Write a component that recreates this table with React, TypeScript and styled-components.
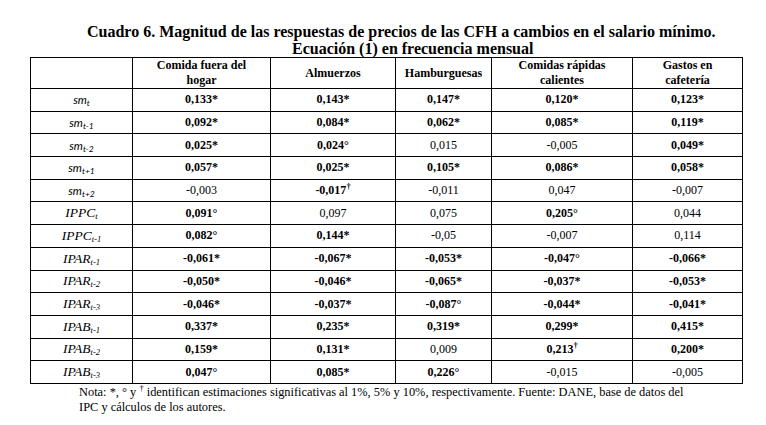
import React from "react";
import styled, { createGlobalStyle } from "styled-components";

const GlobalStyle = createGlobalStyle`
  html, body {
    margin: 0;
    padding: 0;
    background: #ffffff;
    color: #000000;
    font-family: "Liberation Serif", "Times New Roman", serif;
  }
`;

const Page = styled.div`
  width: 766px;
  height: 425px;
  padding-top: 23px;
  box-sizing: border-box;
  overflow: hidden;
`;

const TitleLine = styled.div<{ $indent: number }>`
  padding-left: ${(p) => p.$indent}px;
  font-size: 16px;
  font-weight: bold;
  line-height: 17px;
  white-space: nowrap;
`;

const Table = styled.table`
  margin-left: 30px;
  border-collapse: collapse;
  table-layout: fixed;
  width: 713px;

  td, th {
    border: 1px solid #000;
    text-align: center;
    padding: 0;
  }
`;

const HeadCell = styled.th`
  height: 29px;
  font-size: 12px;
  line-height: 15px;
  font-weight: bold;
  vertical-align: middle;
`;

const Row = styled.tr`
  height: 22.7px;
`;

const Label = styled.td<{ $sans?: boolean }>`
  font-style: italic;
  font-family: ${(p) => (p.$sans ? '"Lato", "Open Sans", sans-serif' : '"Liberation Serif", serif')};
  font-size: ${(p) => (p.$sans ? "11.5px" : "13.5px")};

  sub {
    font-size: 8.5px;
    vertical-align: -2px;
    line-height: 0;
  }
`;

const Value = styled.td<{ $bold: boolean }>`
  font-size: 12px;
  font-weight: ${(p) => (p.$bold ? "bold" : "normal")};

  sup {
    font-size: 8.5px;
    line-height: 0;
    vertical-align: 5px;
  }
`;

const Note = styled.div`
  padding-left: 79px;
  margin-top: 1px;
  font-size: 12.4px;
  line-height: 15px;

  sup {
    font-size: 8.5px;
    line-height: 0;
  }
`;

const columns: string[][] = [
  ["Comida fuera del", "hogar"],
  ["Almuerzos"],
  ["Hamburguesas"],
  ["Comidas rápidas", "calientes"],
  ["Gastos en", "cafetería"],
];
const widths = [102, 138, 125, 96, 141, 110];

type RowData = { name: string; sub: string; sans?: boolean; values: string[] };

const rows: RowData[] = [
  { name: "sm", sub: "t", sans: true, values: ["0,133*", "0,143*", "0,147*", "0,120*", "0,123*"] },
  { name: "sm", sub: "t-1", sans: true, values: ["0,092*", "0,084*", "0,062*", "0,085*", "0,119*"] },
  { name: "sm", sub: "t-2", sans: true, values: ["0,025*", "0,024°", "0,015", "-0,005", "0,049*"] },
  { name: "sm", sub: "t+1", sans: true, values: ["0,057*", "0,025*", "0,105*", "0,086*", "0,058*"] },
  { name: "sm", sub: "t+2", sans: true, values: ["-0,003", "-0,017†", "-0,011", "0,047", "-0,007"] },
  { name: "IPPC", sub: "t", values: ["0,091°", "0,097", "0,075", "0,205°", "0,044"] },
  { name: "IPPC", sub: "t-1", values: ["0,082°", "0,144*", "-0,05", "-0,007", "0,114"] },
  { name: "IPAR", sub: "t-1", values: ["-0,061*", "-0,067*", "-0,053*", "-0,047°", "-0,066*"] },
  { name: "IPAR", sub: "t-2", values: ["-0,050*", "-0,046*", "-0,065*", "-0,037*", "-0,053*"] },
  { name: "IPAR", sub: "t-3", values: ["-0,046*", "-0,037*", "-0,087°", "-0,044*", "-0,041*"] },
  { name: "IPAB", sub: "t-1", values: ["0,337*", "0,235*", "0,319*", "0,299*", "0,415*"] },
  { name: "IPAB", sub: "t-2", values: ["0,159*", "0,131*", "0,009", "0,213†", "0,200*"] },
  { name: "IPAB", sub: "t-3", values: ["0,047°", "0,085*", "0,226°", "-0,015", "-0,005"] },
];

function Cell({ v }: { v: string }) {
  const significant = /[*°†]$/.test(v);
  if (v.endsWith("†")) {
    return (
      <Value $bold>
        {v.slice(0, -1)}
        <sup>†</sup>
      </Value>
    );
  }
  return <Value $bold={significant}>{v}</Value>;
}

export default function App() {
  return (
    <Page>
      <GlobalStyle />
      <TitleLine $indent={87}>
        Cuadro 6. Magnitud de las respuestas de precios de las CFH a cambios en el salario mínimo.
      </TitleLine>
      <TitleLine $indent={292}>Ecuación (1) en frecuencia mensual</TitleLine>
      <Table>
        <colgroup>
          {widths.map((w, i) => (
            <col key={i} style={{ width: w }} />
          ))}
        </colgroup>
        <thead>
          <tr>
            <HeadCell />
            {columns.map((c) => (
              <HeadCell key={c[0]}>
                {c.map((line, k) => (
                  <React.Fragment key={k}>
                    {k > 0 && <br />}
                    {line}
                  </React.Fragment>
                ))}
              </HeadCell>
            ))}
          </tr>
        </thead>
        <tbody>
          {rows.map((r, i) => (
            <Row key={i}>
              <Label $sans={r.sans}>
                {r.name}
                <sub>{r.sub}</sub>
              </Label>
              {r.values.map((v, j) => (
                <Cell key={j} v={v} />
              ))}
            </Row>
          ))}
        </tbody>
      </Table>
      <Note>
        Nota: *, ° y <sup>†</sup> identifican estimaciones significativas al 1%, 5% y 10%, respectivamente. Fuente: DANE, base de datos del
        <br />
        IPC y cálculos de los autores.
      </Note>
    </Page>
  );
}
